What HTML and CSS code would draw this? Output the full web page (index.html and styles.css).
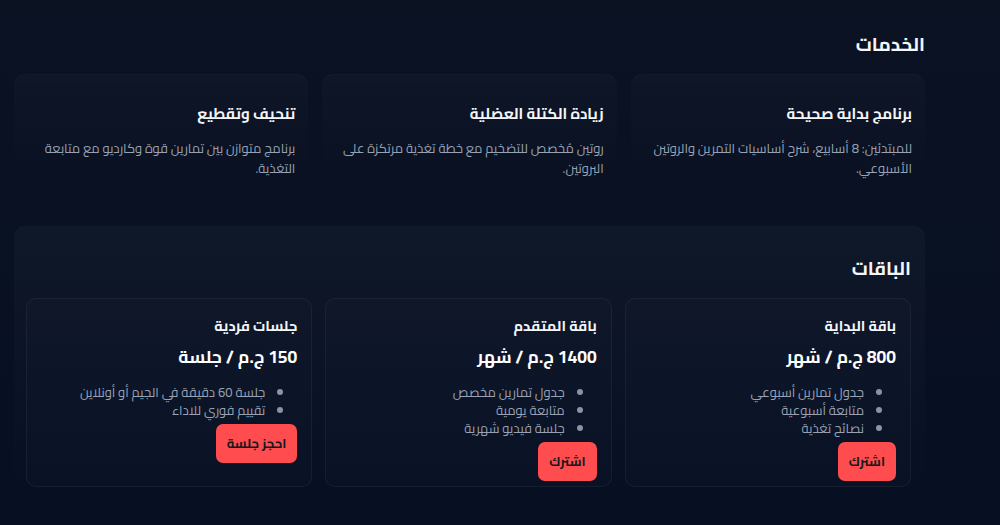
FILE: index.html
```html
<!DOCTYPE html>
<html lang="ar" dir="rtl">
<head>
    <meta charset="UTF-8">
    <meta name="viewport" content="width=device-width, initial-scale=1.0">
    <title>الخدمات والباقات</title>
    <link rel="stylesheet" href="styles.css">
</head>
<body>

    <main class="page">

        <!-- الخدمات -->
        <section class="services">
            <h2 class="section-title">الخدمات</h2>
            <div class="grid">
                <article class="service-card">
                    <h3>برنامج بداية صحيحة</h3>
                    <p>للمبتدئين: 8 أسابيع، شرح أساسيات التمرين والروتين الأسبوعي.</p>
                </article>
                <article class="service-card">
                    <h3>زيادة الكتلة العضلية</h3>
                    <p>روتين مُخصص للتضخيم مع خطة تغذية مرتكزة على البروتين.</p>
                </article>
                <article class="service-card">
                    <h3>تنحيف وتقطيع</h3>
                    <p>برنامج متوازن بين تمارين قوة وكارديو مع متابعة التغذية.</p>
                </article>
            </div>
        </section>

        <!-- الباقات -->
        <section class="packages">
            <h2 class="section-title">الباقات</h2>
            <div class="grid plans">
                <article class="plan">
                    <h3>باقة البداية</h3>
                    <div class="price">800 ج.م / شهر</div>
                    <ul>
                        <li>جدول تمارين أسبوعي</li>
                        <li>متابعة أسبوعية</li>
                        <li>نصائح تغذية</li>
                    </ul>
                    <a href="#" class="btn">اشترك</a>
                </article>
                <article class="plan">
                    <h3>باقة المتقدم</h3>
                    <div class="price">1400 ج.م / شهر</div>
                    <ul>
                        <li>جدول تمارين مخصص</li>
                        <li>متابعة يومية</li>
                        <li>جلسة فيديو شهرية</li>
                    </ul>
                    <a href="#" class="btn">اشترك</a>
                </article>
                <article class="plan">
                    <h3>جلسات فردية</h3>
                    <div class="price">150 ج.م / جلسة</div>
                    <ul>
                        <li>جلسة 60 دقيقة في الجيم أو أونلاين</li>
                        <li>تقييم فوري للاداء</li>
                    </ul>
                    <a href="#" class="btn">احجز جلسة</a>
                </article>
            </div>
        </section>

    </main>

</body>
</html>
```

FILE: styles.css
```css
html {
    min-height: 100%;
    background: linear-gradient(180deg, #0b1222, #061022);
}

body {
    font-family: "Cairo", "Noto Kufi Arabic", "Noto Sans Arabic", "DejaVu Sans", sans-serif;
    color: #e8edf5;
    margin: 0;
}

.page {
    padding: 33px 75px 0 14px;
}

.section-title {
    font-size: 19px;
    font-weight: bold;
    line-height: 22px;
    margin: 0 0 19px;
    color: #f4f6fa;
}

.grid {
    display: grid;
    grid-template-columns: repeat(3, 1fr);
    gap: 14px;
}

/* cartes services */
.service-card {
    padding: 28px 13px 16px;
    border-radius: 12px;
    border-top: 1px solid rgba(255, 255, 255, 0.04);
    background: linear-gradient(180deg, rgba(255, 255, 255, 0.025), rgba(255, 255, 255, 0));
}

.service-card h3 {
    font-size: 15px;
    line-height: 22px;
    margin: 0 0 13px;
    color: #f4f6fa;
}

.service-card p {
    font-size: 13px;
    line-height: 20px;
    margin: 0;
    color: #99a2b4;
}

/* bloc des offres */
.packages {
    margin-top: 32px;
    padding: 30px 14px 12px 12px;
    border-radius: 12px;
    border-top: 1px solid rgba(255, 255, 255, 0.04);
    background: linear-gradient(180deg, rgba(255, 255, 255, 0.03), rgba(255, 255, 255, 0.005));
}

.plans {
    gap: 13px;
}

.plan {
    padding: 16px 14px 5px;
    border-radius: 10px;
    border: 1px solid rgba(255, 255, 255, 0.05);
    background: rgba(255, 255, 255, 0.012);
}

.plan h3 {
    font-size: 14.5px;
    line-height: 22px;
    margin: 0 0 9px;
    color: #f4f6fa;
}

.price {
    font-size: 17.5px;
    font-weight: bold;
    line-height: 22px;
    color: #ffffff;
}

.plan ul {
    margin: 15px 0 5px;
    padding: 0 32px 0 0;
    font-size: 13px;
    line-height: 18px;
    color: #99a2b4;
}

.plan li::marker {
    color: #8b93a5;
}

.btn {
    display: inline-block;
    padding: 10px 11px;
    border-radius: 7px;
    background: #ff4d4f;
    color: #16181d;
    font-size: 13px;
    font-weight: bold;
    line-height: 19px;
    text-decoration: none;
}
```
